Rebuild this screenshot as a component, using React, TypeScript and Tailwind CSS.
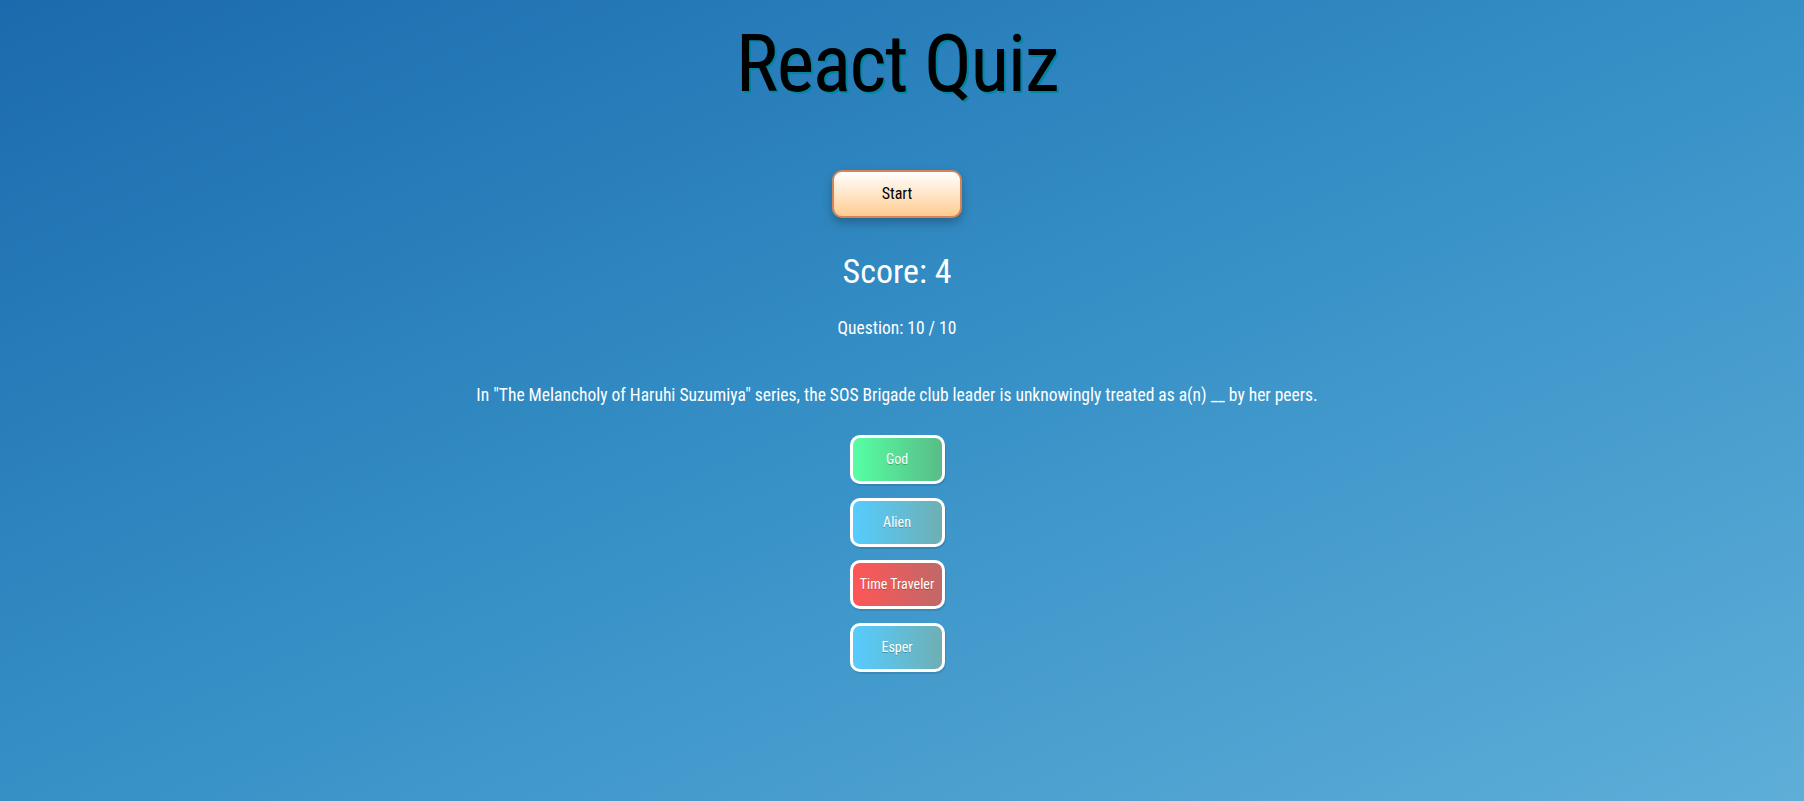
import React from 'react'

const answers = [
  { text: 'God', style: 'bg-[linear-gradient(90deg,#56ffa4,#59bc86)]' },
  { text: 'Alien', style: 'bg-[linear-gradient(90deg,#56ccff,#6eafb4)]' },
  { text: 'Time Traveler', style: 'bg-[linear-gradient(90deg,#ff5656,#c16868)]' },
  { text: 'Esper', style: 'bg-[linear-gradient(90deg,#56ccff,#6eafb4)]' },
]

const App = () => {
  return (
    <div className="min-h-[801px] w-full pr-[10px] bg-[linear-gradient(to_bottom_right,#1b6aad,#3690c6,#5eaed8)] font-['Roboto_Condensed','Roboto',sans-serif] flex flex-col items-center">
      <h1 className="mt-[24px] text-[80px] leading-none tracking-[-1.5px] font-normal text-black [text-shadow:2px_2px_0_#0085a3]">
        React Quiz
      </h1>

      <button className="mt-[66px] w-[130px] h-[48px] rounded-[10px] border-2 border-[#d38558] bg-[linear-gradient(180deg,#ffffff,#ffcc91)] shadow-[0_5px_10px_rgba(0,0,0,0.25)] text-[16px] text-black">
        Start
      </button>

      <p className="mt-[36px] text-[34px] leading-none text-white">Score: 4</p>

      <p className="mt-[32px] text-[17.5px] leading-none text-white">Question: 10 / 10</p>

      <p className="mt-[49px] text-[17.5px] leading-none text-white">
        In "The Melancholy of Haruhi Suzumiya" series, the SOS Brigade club leader is unknowingly treated as a(n) __ by her peers.
      </p>

      <div className="mt-[31px] flex flex-col items-center gap-[13.5px]">
        {answers.map((a) => (
          <button
            key={a.text}
            className={`w-[95px] h-[49px] rounded-[10px] border-[3px] border-white ${a.style} shadow-[1px_2px_0_rgba(0,0,0,0.1)] text-[14px] text-white [text-shadow:0_1px_0_rgba(0,0,0,0.25)]`}
          >
            {a.text}
          </button>
        ))}
      </div>
    </div>
  )
}

export default App
